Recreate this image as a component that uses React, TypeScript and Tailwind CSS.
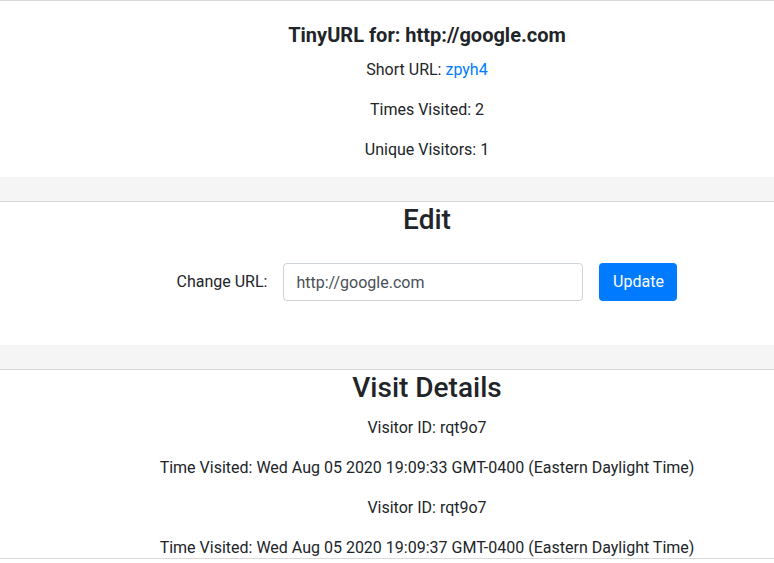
export default function App() {
  return (
    <div className="min-h-screen bg-[#f5f5f5] text-[#212529] [font-family:Roboto,'Liberation_Sans',sans-serif] text-[16px] leading-6">
      {/* Summary */}
      <section className="border-t border-[#d9d9d9] bg-white pl-20 pt-[22px] pb-[15px]">
        <div className="flex flex-col items-center text-center">
          <h3 className="mb-[11px] text-[20px] font-bold leading-6">TinyURL for: http://google.com</h3>
          <div className="flex flex-col gap-4">
            <p>
              Short URL: <a className="text-[#007bff]" href="#">zpyh4</a>
            </p>
            <p>Times Visited: 2</p>
            <p>Unique Visitors: 1</p>
          </div>
        </div>
      </section>

      {/* Edit */}
      <section className="mt-6 border-t border-[#d9d9d9] bg-white pl-20 pt-px pb-11">
        <h2 className="text-center text-[28px] font-medium leading-[34px]">Edit</h2>
        <form className="mt-[26px] flex items-center justify-center gap-4" onSubmit={(e) => e.preventDefault()}>
          <label className="text-[16px]">Change URL:</label>
          <input
            className="h-[38px] w-[300px] rounded border border-[#ced4da] bg-white px-3 text-[16px] text-[#495057] outline-none"
            defaultValue="http://google.com"
          />
          <button type="submit" className="h-[38px] w-[78px] rounded bg-[#007bff] text-[16px] text-white">
            Update
          </button>
        </form>
      </section>

      {/* Visit details */}
      <section className="mt-6 border-t border-[#d9d9d9] bg-white pl-20 pt-px">
        <h2 className="mb-[11px] text-center text-[28px] font-medium leading-[34px]">Visit Details</h2>
        <div className="flex flex-col items-center gap-4 text-center">
          <p>Visitor ID: rqt9o7</p>
          <p>Time Visited: Wed Aug 05 2020 19:09:33 GMT-0400 (Eastern Daylight Time)</p>
          <p>Visitor ID: rqt9o7</p>
          <p className="h-[22px]">Time Visited: Wed Aug 05 2020 19:09:37 GMT-0400 (Eastern Daylight Time)</p>
        </div>
      </section>
      <div className="h-3 border-t border-[#d9d9d9] bg-white" />
    </div>
  );
}
